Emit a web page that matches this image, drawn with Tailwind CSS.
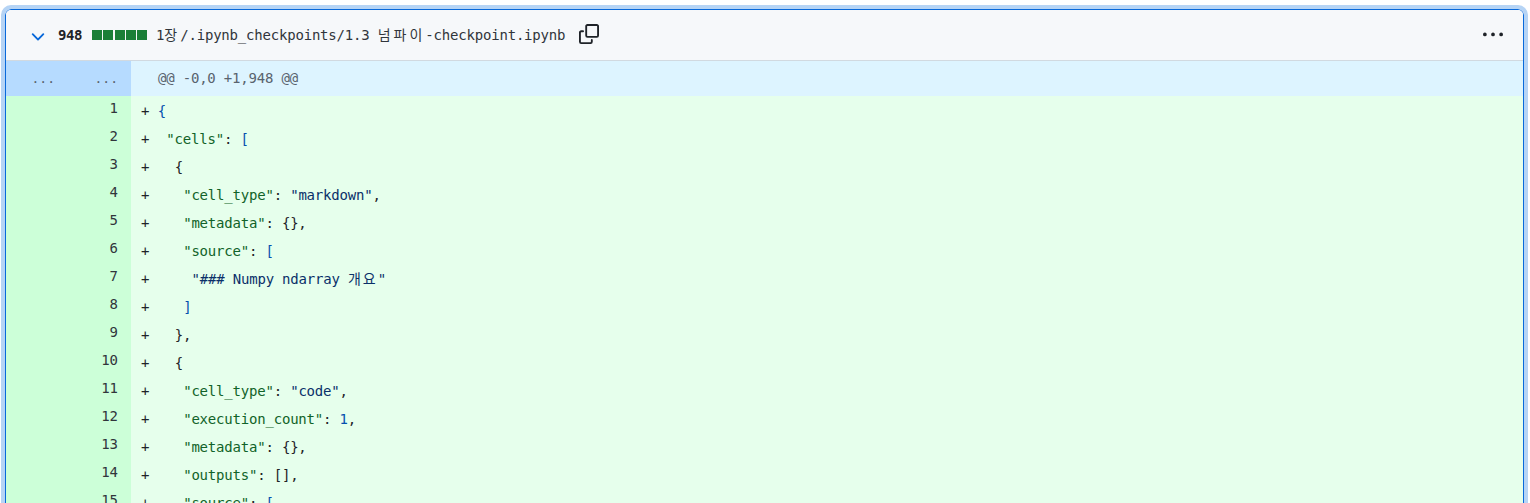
<!DOCTYPE html>
<html lang="en">
<head>
    <meta charset="UTF-8">
    <title>Diff</title>
    <script src="https://cdn.jsdelivr.net/npm/@tailwindcss/browser@4"></script>
</head>
<body class="bg-white h-[503px] overflow-hidden font-['Liberation_Sans',sans-serif] text-[#1f2328]">
    <div class="ml-px mr-[2px] mt-[5px] border-4 border-[#b6d4f5] rounded-[10px] h-[520px] overflow-hidden">
        <div class="border border-[#0969da] rounded-md h-full overflow-hidden">
            <!-- file header -->
            <div class="h-[51px] bg-[#f6f8fa] border-b border-[#d1d9e0] flex items-center pl-[22px] pr-[20px]">
                <svg class="w-5 h-5 mt-1 text-[#0969da]" viewBox="0 0 16 16" fill="currentColor"><path d="M12.78 5.22a.749.749 0 0 1 0 1.06l-4.25 4.25a.749.749 0 0 1-1.06 0L3.22 6.28a.749.749 0 1 1 1.06-1.06L8 8.939l3.72-3.719a.749.749 0 0 1 1.06 0Z"/></svg>
                <span class="ml-[10px] text-[14px] font-bold font-['DejaVu_Sans_Mono',monospace] tracking-[-0.4px]">948</span>
                <span class="ml-[10px] flex gap-[1.25px]">
                    <span class="w-[10px] h-[10px] bg-[#1a7f37]"></span>
                    <span class="w-[10px] h-[10px] bg-[#1a7f37]"></span>
                    <span class="w-[10px] h-[10px] bg-[#1a7f37]"></span>
                    <span class="w-[10px] h-[10px] bg-[#1a7f37]"></span>
                    <span class="w-[10px] h-[10px] bg-[#1a7f37]"></span>
                </span>
                <span class="ml-[9px] w-[409px] shrink-0 whitespace-nowrap text-[14px] font-['DejaVu_Sans_Mono','Noto_Sans_CJK_KR',monospace] text-[#31353b] tracking-[-0.2px]">1<span class="tracking-[3px]">장</span>/.ipynb_checkpoints/1.3 <span class="tracking-[3px]">넘파이</span>-checkpoint.ipynb</span>
                <svg class="ml-[14px] mb-[2px] w-5 h-5 text-[#1f2328]" viewBox="0 0 16 16" fill="currentColor"><path d="M0 6.75C0 5.784.784 5 1.75 5h1.5a.75.75 0 0 1 0 1.5h-1.5a.25.25 0 0 0-.25.25v7.5c0 .138.112.25.25.25h7.5a.25.25 0 0 0 .25-.25v-1.5a.75.75 0 0 1 1.5 0v1.5A1.75 1.75 0 0 1 9.25 16h-7.5A1.75 1.75 0 0 1 0 14.25Z"/><path d="M5 1.75C5 .784 5.784 0 6.75 0h7.5C15.216 0 16 .784 16 1.75v7.5A1.75 1.75 0 0 1 14.25 11h-7.5A1.75 1.75 0 0 1 5 9.25Zm1.75-.25a.25.25 0 0 0-.25.25v7.5c0 .138.112.25.25.25h7.5a.25.25 0 0 0 .25-.25v-7.5a.25.25 0 0 0-.25-.25Z"/></svg>
                <svg class="ml-auto w-5 h-5 text-[#1f2328]" viewBox="0 0 16 16" fill="currentColor"><path d="M8 9a1.5 1.5 0 1 0 0-3 1.5 1.5 0 0 0 0 3ZM1.5 9a1.5 1.5 0 1 0 0-3 1.5 1.5 0 0 0 0 3Zm13 0a1.5 1.5 0 1 0 0-3 1.5 1.5 0 0 0 0 3Z"/></svg>
            </div>
            <!-- diff -->
            <div class="font-['DejaVu_Sans_Mono','Noto_Sans_CJK_KR',monospace] text-[14px] leading-[30px]">
                <div class="flex h-[35px] bg-[#ddf4ff]">
                    <div class="w-[125px] shrink-0 bg-[#b6dbff] bg-[radial-gradient(#a3d0fb_0.6px,transparent_0.6px)] bg-[length:4px_4px] flex text-[#59636e] text-[13px] leading-[35px]">
                        <span class="w-[63px] pr-[14px] text-right">...</span>
                        <span class="w-[62px] pr-[13px] text-right">...</span>
                    </div>
                    <div class="pl-[27px] leading-[35px] text-[#59636e] tracking-[-0.2px]">@@ -0,0 +1,948 @@</div>
                </div>
                <div class="flex h-[28px]"><div class="w-[125px] shrink-0 bg-[#ccffd8] text-right pr-[13px] text-[#31353b] leading-[24px]">1</div><div class="flex-1 bg-[#e6ffec] pl-[10px] whitespace-pre tracking-[-0.2px]"><span class="tracking-normal">+ </span><span class="text-[#0550ae]">{</span></div></div>
                <div class="flex h-[28px]"><div class="w-[125px] shrink-0 bg-[#ccffd8] text-right pr-[13px] text-[#31353b] leading-[24px]">2</div><div class="flex-1 bg-[#e6ffec] pl-[10px] whitespace-pre tracking-[-0.2px]"><span class="tracking-normal">+  </span><span class="text-[#116329]">"cells"</span>: <span class="text-[#0550ae]">[</span></div></div>
                <div class="flex h-[28px]"><div class="w-[125px] shrink-0 bg-[#ccffd8] text-right pr-[13px] text-[#31353b] leading-[24px]">3</div><div class="flex-1 bg-[#e6ffec] pl-[10px] whitespace-pre tracking-[-0.2px]"><span class="tracking-normal">+   </span>{</div></div>
                <div class="flex h-[28px]"><div class="w-[125px] shrink-0 bg-[#ccffd8] text-right pr-[13px] text-[#31353b] leading-[24px]">4</div><div class="flex-1 bg-[#e6ffec] pl-[10px] whitespace-pre tracking-[-0.2px]"><span class="tracking-normal">+    </span><span class="text-[#116329]">"cell_type"</span>: <span class="text-[#0a3069]">"markdown"</span>,</div></div>
                <div class="flex h-[28px]"><div class="w-[125px] shrink-0 bg-[#ccffd8] text-right pr-[13px] text-[#31353b] leading-[24px]">5</div><div class="flex-1 bg-[#e6ffec] pl-[10px] whitespace-pre tracking-[-0.2px]"><span class="tracking-normal">+    </span><span class="text-[#116329]">"metadata"</span>: {},</div></div>
                <div class="flex h-[28px]"><div class="w-[125px] shrink-0 bg-[#ccffd8] text-right pr-[13px] text-[#31353b] leading-[24px]">6</div><div class="flex-1 bg-[#e6ffec] pl-[10px] whitespace-pre tracking-[-0.2px]"><span class="tracking-normal">+    </span><span class="text-[#116329]">"source"</span>: <span class="text-[#0550ae]">[</span></div></div>
                <div class="flex h-[28px]"><div class="w-[125px] shrink-0 bg-[#ccffd8] text-right pr-[13px] text-[#31353b] leading-[24px]">7</div><div class="flex-1 bg-[#e6ffec] pl-[10px] whitespace-pre tracking-[-0.2px]"><span class="tracking-normal">+     </span><span class="text-[#0a3069]">"### Numpy ndarray <span class="tracking-[2px]">개요</span>"</span></div></div>
                <div class="flex h-[28px]"><div class="w-[125px] shrink-0 bg-[#ccffd8] text-right pr-[13px] text-[#31353b] leading-[24px]">8</div><div class="flex-1 bg-[#e6ffec] pl-[10px] whitespace-pre tracking-[-0.2px]"><span class="tracking-normal">+    </span><span class="text-[#0550ae]">]</span></div></div>
                <div class="flex h-[28px]"><div class="w-[125px] shrink-0 bg-[#ccffd8] text-right pr-[13px] text-[#31353b] leading-[24px]">9</div><div class="flex-1 bg-[#e6ffec] pl-[10px] whitespace-pre tracking-[-0.2px]"><span class="tracking-normal">+   </span>},</div></div>
                <div class="flex h-[28px]"><div class="w-[125px] shrink-0 bg-[#ccffd8] text-right pr-[13px] text-[#31353b] leading-[24px]">10</div><div class="flex-1 bg-[#e6ffec] pl-[10px] whitespace-pre tracking-[-0.2px]"><span class="tracking-normal">+   </span>{</div></div>
                <div class="flex h-[28px]"><div class="w-[125px] shrink-0 bg-[#ccffd8] text-right pr-[13px] text-[#31353b] leading-[24px]">11</div><div class="flex-1 bg-[#e6ffec] pl-[10px] whitespace-pre tracking-[-0.2px]"><span class="tracking-normal">+    </span><span class="text-[#116329]">"cell_type"</span>: <span class="text-[#0a3069]">"code"</span>,</div></div>
                <div class="flex h-[28px]"><div class="w-[125px] shrink-0 bg-[#ccffd8] text-right pr-[13px] text-[#31353b] leading-[24px]">12</div><div class="flex-1 bg-[#e6ffec] pl-[10px] whitespace-pre tracking-[-0.2px]"><span class="tracking-normal">+    </span><span class="text-[#116329]">"execution_count"</span>: <span class="text-[#0550ae]">1</span>,</div></div>
                <div class="flex h-[28px]"><div class="w-[125px] shrink-0 bg-[#ccffd8] text-right pr-[13px] text-[#31353b] leading-[24px]">13</div><div class="flex-1 bg-[#e6ffec] pl-[10px] whitespace-pre tracking-[-0.2px]"><span class="tracking-normal">+    </span><span class="text-[#116329]">"metadata"</span>: {},</div></div>
                <div class="flex h-[28px]"><div class="w-[125px] shrink-0 bg-[#ccffd8] text-right pr-[13px] text-[#31353b] leading-[24px]">14</div><div class="flex-1 bg-[#e6ffec] pl-[10px] whitespace-pre tracking-[-0.2px]"><span class="tracking-normal">+    </span><span class="text-[#116329]">"outputs"</span>: [],</div></div>
                <div class="flex h-[28px]"><div class="w-[125px] shrink-0 bg-[#ccffd8] text-right pr-[13px] text-[#31353b] leading-[24px]">15</div><div class="flex-1 bg-[#e6ffec] pl-[10px] whitespace-pre tracking-[-0.2px]"><span class="tracking-normal">+    </span><span class="text-[#116329]">"source"</span>: <span class="text-[#0550ae]">[</span></div></div>
            </div>
        </div>
    </div>
</body>
</html>
